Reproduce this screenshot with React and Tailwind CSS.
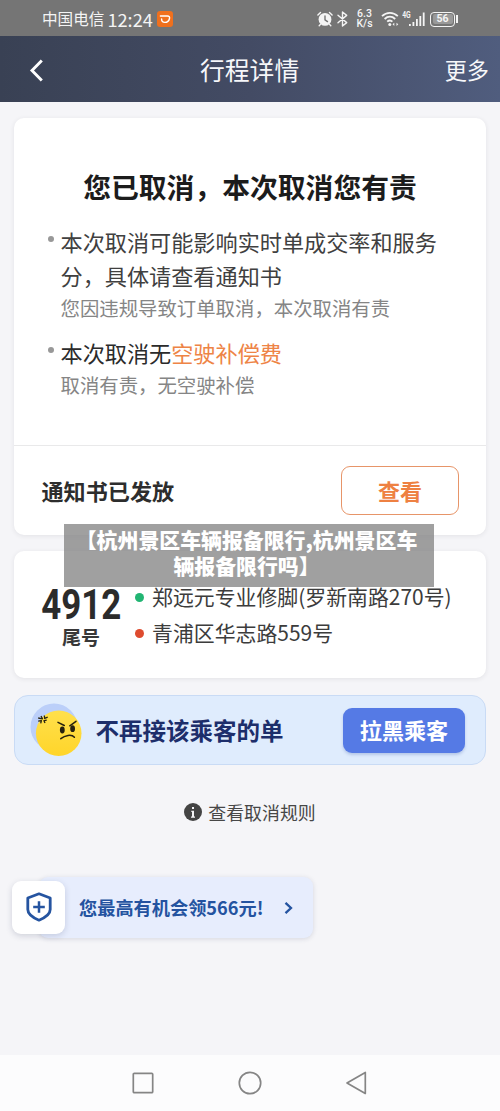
import React from 'react';

const notes = [
    {
        title: '本次取消可能影响实时单成交率和服务分，具体请查看通知书',
        desc: '您因违规导致订单取消，本次取消有责',
    },
    {
        title: '本次取消无',
        highlight: '空驶补偿费',
        desc: '取消有责，无空驶补偿',
    },
];

const stops = [
    { name: '郑远元专业修脚(罗新南路270号)', dot: 'bg-[#22b573]' },
    { name: '青浦区华志路559号', dot: 'bg-[#de4b2f]' },
];

function StatusBar() {
    return (
        <div className="flex h-9 items-center bg-[#757575] pl-[42px] pr-[42px] pt-[2px] text-[#f4f4f4]">
            <span className="text-[15.6px] leading-none">中国电信</span>
            <span className="ml-[3px] font-['Noto_Sans_CJK_SC'] text-[18.2px] leading-none">12:24</span>
            <span className="mb-[1px] ml-1 flex h-4 w-4 items-center justify-center rounded-[3px] bg-[#f0701d]">
                <svg className="h-4 w-4" viewBox="0 0 16 16" fill="none" stroke="#fff" strokeWidth="1.4" strokeLinecap="round" strokeLinejoin="round">
                    <path d="M3.4 5H10.4C12.2 5 12.8 6 12.5 7.5C12 9.8 10 11.4 7.8 11.4C5.6 11.4 4.6 10 4.6 8" />
                </svg>
            </span>

            <div className="ml-auto flex items-center">
                <svg className="h-4 w-4" viewBox="0 0 16 16" fill="none" stroke="currentColor" strokeLinecap="round">
                    <circle cx="8" cy="8.4" r="6.4" fill="currentColor" stroke="none" />
                    <path d="M.9 4L3.5 1.5M15.1 4L12.5 1.5M3.4 13.4L2.2 14.8M12.6 13.4L13.8 14.8" strokeWidth="1.4" />
                    <path d="M8 5V8.8L10.5 10.6" stroke="#757575" strokeWidth="1.4" />
                </svg>
                <svg className="ml-[4px] h-4 w-[11px]" viewBox="0 0 11 16" fill="none" stroke="currentColor" strokeWidth="1.4" strokeLinejoin="round" strokeLinecap="round">
                    <path d="M1 4.3L9.7 11.6L5.5 15V1L9.7 4.4L1 11.7" />
                </svg>
                <div className="ml-[8px] flex w-[17px] flex-col items-center font-['Roboto'] text-[10.5px] font-medium leading-[10px]">
                    <div>6.3</div>
                    <div>K/s</div>
                </div>
                <svg className="ml-2 h-4 w-[18px]" viewBox="0 0 18 16" fill="none" stroke="currentColor" strokeWidth="1.8">
                    <path d="M1 5.2C5.6 .8 12.2 .8 16.8 5.2M3.6 8C6.8 5 11 5 14.2 8M6.2 10.7C7.9 9.2 9.9 9.2 11.4 10.7" />
                    <circle cx="8.8" cy="13.5" r="1.5" fill="currentColor" stroke="none" />
                    <path d="M11.5 13.3L13.3 11.7V14.9ZM17.3 13.3L15.5 11.7V14.9Z" fill="currentColor" stroke="none" />
                </svg>
                <span className="mb-[8px] ml-[2px] w-[10px] scale-x-[0.75] font-['Roboto'] text-[9px] font-bold leading-none">4G</span>
                <svg className="-ml-[2px] h-4 w-4" viewBox="0 0 16 16" fill="currentColor">
                    <path d="M0 13h1.8v2H0zM3.5 11h1.8v4H3.5zM7 8h1.8v7H7zM10.4 5h1.8v10h-1.8zM13.8 1.5h1.8V15h-1.8z" />
                </svg>
                <div className="ml-[5px] flex h-[15px] w-[25px] items-center rounded-[4px] border-[1.5px] border-current p-[1.5px]">
                    <span className="flex h-full w-full items-center justify-center rounded-[2px] bg-[#999] font-['Roboto'] text-[10.5px] font-bold leading-none">56</span>
                </div>
                <span className="ml-[1px] h-2 w-[2px] bg-current" />
            </div>
        </div>
    );
}

function Header() {
    return (
        <header className="flex h-[66px] items-center bg-gradient-to-r from-[#394154] via-[#434b64] to-[#505d7e] pl-[29px] pr-[11px] pt-[1px] text-[#f6f7fa]">
            <svg className="mt-[1px] h-[23px] w-[15px]" viewBox="0 0 15 23" fill="none" stroke="#fff" strokeWidth="2.9">
                <path d="M12.8 1.5L3 11.5L12.8 21.5" />
            </svg>
            <h1 className="ml-[156px] text-[24.8px] leading-none">行程详情</h1>
            <span className="ml-auto text-[22.2px] leading-none">更多</span>
        </header>
    );
}

function CancelCard() {
    return (
        <section className="h-[417px] rounded-[10px] bg-white shadow-[0_1px_5px_rgba(40,45,60,0.09)]">
            <div className="flex h-[328px] flex-col border-b border-[#e9e9ea] pt-12">
                <h2 className="text-center text-[27.8px] font-bold leading-[40px] text-[#1c1c1c]">您已取消，本次取消您有责</h2>
                <ul className="mt-[17.5px] flex flex-col gap-3 pl-[34px] pr-[40px]">
                    {notes.map((note) => (
                        <li key={note.desc} className="flex">
                            <span className="mt-3 h-1.5 w-1.5 shrink-0 rounded-full bg-[#989898]" />
                            <div className="ml-[6.5px] w-[380px]">
                                <p className={note.highlight ? 'text-[22.15px] leading-[34px] text-[#2b2b2b]' : 'text-[22.15px] leading-[34px] text-[#404040]'}>
                                    {note.title}
                                    {note.highlight && <span className="text-[#ee8446]">{note.highlight}</span>}
                                </p>
                                <p className="mt-[1px] text-[19.4px] leading-[30px] text-[#858585]">{note.desc}</p>
                            </div>
                        </li>
                    ))}
                </ul>
            </div>
            <div className="flex h-[89px] items-center justify-between pl-[27.5px] pr-[27px]">
                <span className="text-[22.1px] font-bold text-[#2d2d2d]">通知书已发放</span>
                <button className="h-[49px] w-[118px] rounded-[9px] border-[1.5px] border-[#e79569] text-[22px] font-bold text-[#ee8142]">
                    查看
                </button>
            </div>
        </section>
    );
}

function OrderCard() {
    return (
        <section className="mt-4 flex h-[127px] rounded-[10px] bg-white pl-[26px] shadow-[0_1px_5px_rgba(40,45,60,0.09)]">
            <div className="flex w-[82px] flex-col items-center pt-[34px]">
                <span className="scale-x-[0.83] font-['Roboto'] text-[42px] font-bold leading-[40px] text-[#2b2b2b]">4912</span>
                <span className="text-[19px] font-bold leading-6 text-[#383838]">尾号</span>
            </div>
            <ul className="ml-[13px] pt-[28px]">
                {stops.map((stop) => (
                    <li key={stop.name} className="flex h-9 items-center whitespace-nowrap text-[20.9px] text-[#3c3c3c]">
                        <span className={`mr-[8px] h-[9px] w-[9px] rounded-full ${stop.dot}`} />
                        {stop.name}
                    </li>
                ))}
            </ul>
        </section>
    );
}

function BlockBanner() {
    return (
        <section className="mt-[17px] flex h-[70px] items-center rounded-[14px] border border-[#c9dbf5] bg-[#dfecfd] pl-[15px] pr-5">
            <svg className="mb-[1px] h-[54px] w-[54px]" viewBox="0 0 54 54" fill="none">
                <defs>
                    <linearGradient id="face" x1="0" y1="0" x2="0" y2="1">
                        <stop offset="0" stopColor="#ffe04c" />
                        <stop offset="1" stopColor="#ffd52a" />
                    </linearGradient>
                </defs>
                <circle cx="24" cy="24" r="23.5" fill="#bbcff9" />
                <circle cx="28.7" cy="30.2" r="22.8" fill="url(#face)" />
                <ellipse cx="32.3" cy="27" rx="2.4" ry="3.4" fill="#26210f" />
                <ellipse cx="42.6" cy="25.7" rx="2.4" ry="3.4" fill="#26210f" />
                <path d="M28 19.3L34.3 22.5M46 18.3L39.8 22.8M30.8 35.7C34.8 32.4 41.5 30.8 44.4 34.3" stroke="#26210f" strokeWidth="1.5" strokeLinecap="round" />
                <path d="M11 13L12.5 15.8L8.2 15M14.3 12.5L14.7 15.3L17.7 14.2M8.2 18.2L11.4 17.6L10.7 20.3M16.7 17.1L14 17.7L15 20" stroke="#26210f" strokeWidth="1.3" strokeLinejoin="round" />
            </svg>
            <span className="ml-[11.5px] mt-[2px] text-[23.5px] font-bold text-[#1d2e6b]">不再接该乘客的单</span>
            <button className="ml-auto h-[45px] w-[122px] rounded-[9px] bg-[#557ae5] text-[22.1px] font-bold text-white shadow-[0_2px_3px_rgba(60,90,170,0.25)]">
                拉黑乘客
            </button>
        </section>
    );
}

function RewardEntry() {
    return (
        <div className="ml-3 mt-[53px] flex h-[61px] w-[301px] items-center">
            <div className="relative z-10 flex h-[53px] w-[53px] items-center justify-center rounded-[9px] bg-white shadow-[0_2px_6px_rgba(40,50,90,0.18)]">
                <svg className="mb-[2px] h-[30px] w-[26px]" viewBox="0 0 26 30" fill="none" stroke="#2554a0" strokeWidth="2.8" strokeLinejoin="round">
                    <path d="M13 1.8L24.2 6V17.5C24.2 22.5 19.5 25.5 13 28.2C6.5 25.5 1.8 22.5 1.8 17.5V6Z" />
                    <path d="M13 9.2V20.8M7.2 15H18.8" strokeWidth="2.5" />
                </svg>
            </div>
            <div className="-ml-[26px] flex h-full flex-1 items-center rounded-[9px] bg-[#e7edfd] pl-[40px] pr-[20px] text-[#2453a0] shadow-[0_1px_5px_rgba(40,50,90,0.15)]">
                <span className="mt-[1px] whitespace-nowrap text-[18.2px] font-bold">您最高有机会领566元!</span>
                <svg className="ml-auto h-3 w-[9px]" viewBox="0 0 9 12" fill="none" stroke="currentColor" strokeWidth="2.3">
                    <path d="M1.5 .8L7 6L1.5 11.2" />
                </svg>
            </div>
        </div>
    );
}

function NavBar() {
    return (
        <nav className="mt-auto flex h-14 items-center justify-between bg-[#fcfcfd] px-[132px] text-[#858585]">
            <svg className="h-[22px] w-[22px]" viewBox="0 0 22 22" fill="none" stroke="currentColor" strokeWidth="1.7">
                <rect x="1.3" y="1.3" width="19.4" height="19.4" rx="1" />
            </svg>
            <svg className="h-6 w-6" viewBox="0 0 24 24" fill="none" stroke="currentColor" strokeWidth="1.7">
                <circle cx="12" cy="12" r="10.7" />
            </svg>
            <svg className="h-6 w-[22px]" viewBox="0 0 22 24" fill="none" stroke="currentColor" strokeWidth="1.7" strokeLinejoin="round">
                <path d="M19.3 1.5V22.5L1 12Z" />
            </svg>
        </nav>
    );
}

export default function App() {
    return (
        <div className="relative flex h-[1111px] w-[500px] flex-col overflow-hidden bg-[#f5f5f8] font-['Noto_Sans_CJK_SC',sans-serif]">
            <StatusBar />
            <Header />
            <main className="px-[14px] pt-4">
                <CancelCard />
                <OrderCard />
                <BlockBanner />
            </main>
            <div className="mt-[35px] flex h-6 items-center justify-center text-[#474747]">
                <span className="mr-[6px] flex h-[18px] w-[18px] items-center justify-center rounded-full bg-[#444]">
                    <svg className="h-[11px] w-1" viewBox="0 0 4 11" fill="#f5f5f8">
                        <path d="M1 0h2v2H1zM.3 3.7H3V9.5H4V10.8H0V9.5H1V5H.3z" />
                    </svg>
                </span>
                <span className="text-[17.9px]">查看取消规则</span>
            </div>
            <RewardEntry />
            <NavBar />

            {/* Caption over the cards */}
            <div className="absolute left-[64px] top-[524px] h-[63px] w-[370px] bg-[#808080]/75 pr-[5px] pt-[3px] text-center text-[20.9px] font-black leading-[25.5px] text-white">
                【杭州景区车辆报备限行,杭州景区车
                <br />
                辆报备限行吗】
            </div>
        </div>
    );
}
